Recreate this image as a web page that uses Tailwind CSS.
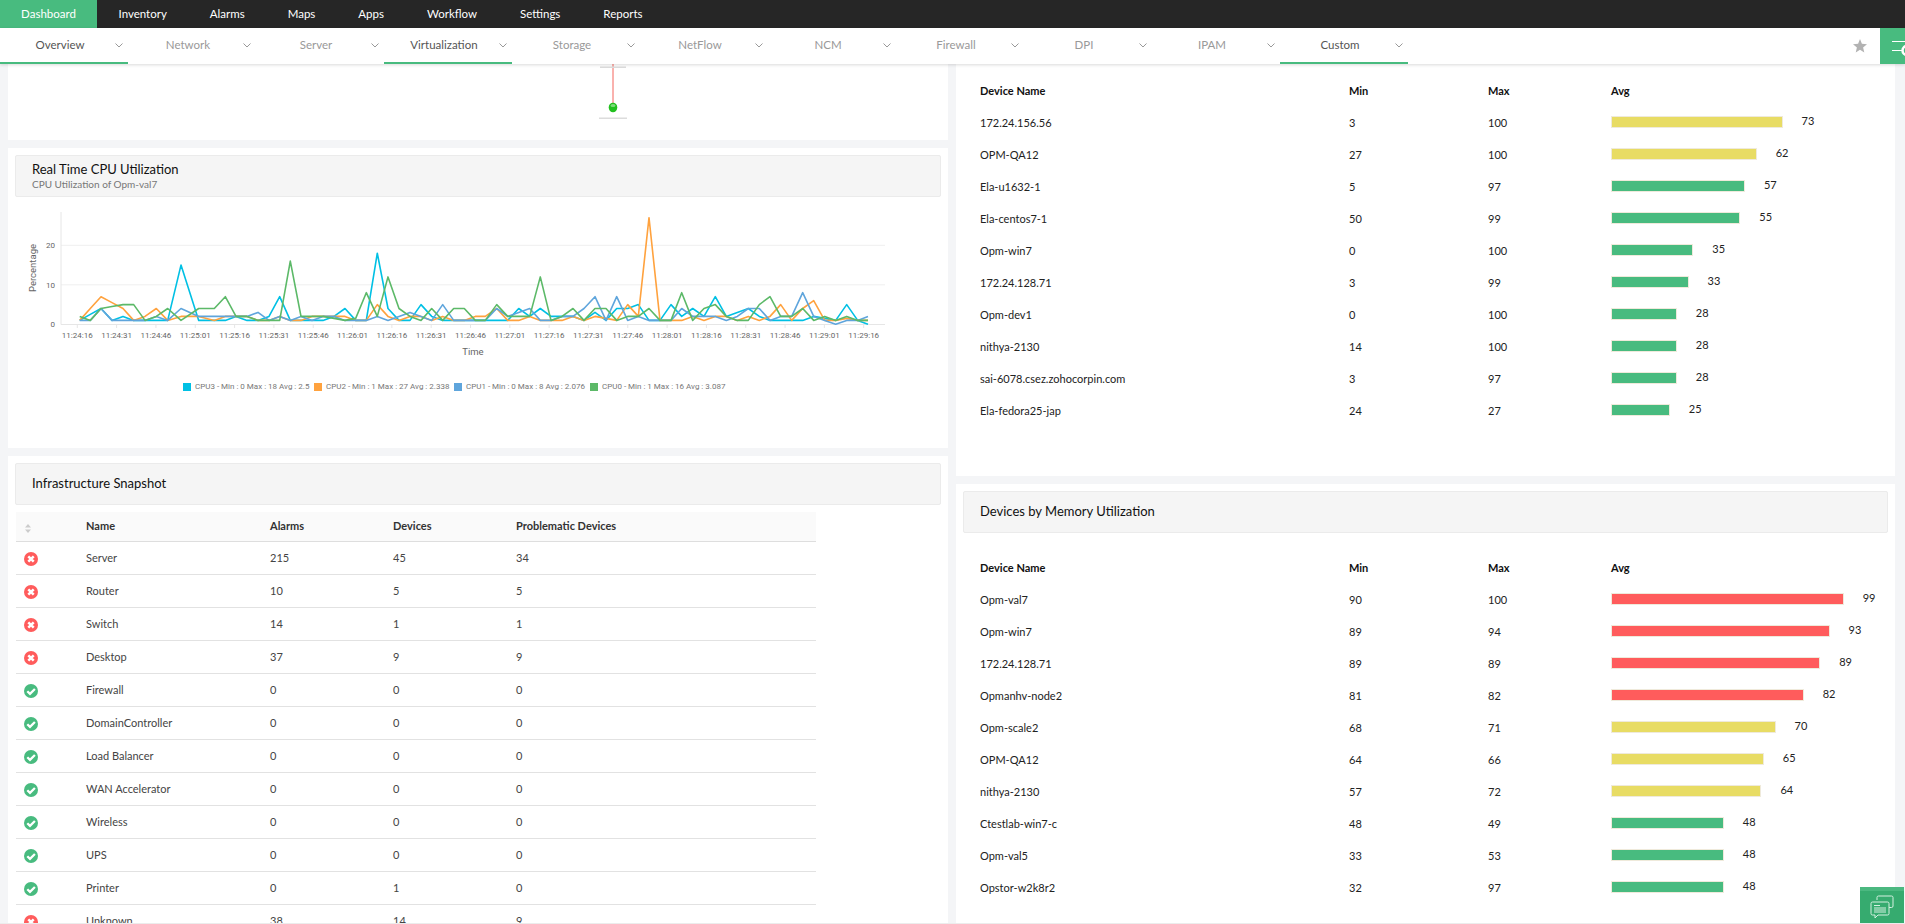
<!DOCTYPE html>
<html lang="en">
<head>
    <meta charset="UTF-8">
    <title>Dashboard - Virtualization</title>
    <script src="https://cdn.jsdelivr.net/npm/@tailwindcss/browser@4"></script>
</head>
<body class="h-screen overflow-hidden bg-[#f4f5f7] font-['Lato',sans-serif] text-[11px] text-[#222]">

    <!-- Main menu -->
    <nav class="flex h-[28px] bg-[#262626] text-[11.5px] text-white">
        <a class="flex w-[97px] items-center justify-center bg-[#48bb7f]">Dashboard</a>
        <a class="flex items-center px-[21.5px]">Inventory</a>
        <a class="flex items-center px-[21.5px]">Alarms</a>
        <a class="flex items-center px-[21.5px]">Maps</a>
        <a class="flex items-center px-[21.5px]">Apps</a>
        <a class="flex items-center px-[21.5px]">Workflow</a>
        <a class="flex items-center px-[21.5px]">Settings</a>
        <a class="flex items-center px-[21.5px]">Reports</a>
    </nav>

    <!-- Sub menu -->
    <div class="relative z-10 flex h-[36px] bg-white text-[11.5px] shadow-[0_1px_3px_rgba(0,0,0,0.15)]">
        <div id="tabs" class="flex flex-1"></div>
        <div class="flex w-[40px] items-center">
            <svg class="ml-[13px]" width="14" height="14" viewBox="0 0 14 14"><polygon points="7,0 8.9,4.8 14,5.2 10.1,8.5 11.3,13.6 7,10.8 2.7,13.6 3.9,8.5 0,5.2 5.1,4.8" fill="#b2b2b2"/></svg>
        </div>
        <div class="h-[36px] w-[25px] overflow-hidden bg-[#48bb7f]">
            <svg width="25" height="36" viewBox="0 0 25 36"><path d="M12 13.5H25M12 22.5H22" stroke="#fff" stroke-width="1"/><circle cx="27" cy="22.5" r="4.5" fill="none" stroke="#fff" stroke-width="2.5"/></svg>
        </div>
    </div>

    <main class="grid h-[860px] grid-cols-[940px_939px] gap-x-[8px] overflow-hidden border-b border-[#ececec] pl-[8px]">

        <!-- Left column -->
        <div class="flex flex-col gap-y-[8px]">
            <!-- Topology map, scrolled under the menu -->
            <section class="h-[76px] shrink-0 bg-white">
                <svg width="940" height="76" viewBox="8 64 940 76">
                    <line x1="613" y1="64" x2="613" y2="104" stroke="#f4655c" stroke-width="1"/>
                    <rect x="600" y="66.500" width="26" height="1.500" fill="#dcdcdc"/>
                    <ellipse cx="613" cy="107.500" rx="4.300" ry="4.800" fill="#22c01f"/>
                    <ellipse cx="613" cy="105.500" rx="2.500" ry="1.500" fill="#7fdc7c"/>
                    <rect x="599" y="117.500" width="28" height="1.500" fill="#dcdcdc"/>
                </svg>
            </section>

            <!-- Real time CPU -->
            <section class="h-[300px] shrink-0 bg-white pt-[7px]">
                <div class="mx-[7px] flex h-[42px] flex-col justify-center rounded-[2px] border border-[#ebebeb] bg-[#f5f5f5] pl-[16px]">
                    <h2 class="text-[13px] leading-[17px] text-[#111]">Real Time CPU Utilization</h2>
                    <p class="text-[10px] leading-[13px] text-[#777]">CPU Utilization of Opm-val7</p>
                </div>
                <svg id="chart" class="block" width="940" height="172" viewBox="8 197 940 172"></svg>
                <div class="mt-[13px] flex items-center whitespace-nowrap pl-[175px] font-['Roboto',sans-serif] text-[8px] leading-[10px] text-[#777]">
                    <span class="h-[8px] w-[8px] bg-[#00c0e4]"></span><span class="ml-[4px] w-[119px]">CPU3 - Min : 0 Max : 18 Avg : 2.5</span>
                    <span class="h-[8px] w-[8px] bg-[#ffa23e]"></span><span class="ml-[4px] w-[128px]">CPU2 - Min : 1 Max : 27 Avg : 2.338</span>
                    <span class="h-[8px] w-[8px] bg-[#5fa5dc]"></span><span class="ml-[4px] w-[124px]">CPU1 - Min : 0 Max : 8 Avg : 2.076</span>
                    <span class="h-[8px] w-[8px] bg-[#5cb968]"></span><span class="ml-[4px]">CPU0 - Min : 1 Max : 16 Avg : 3.087</span>
                </div>
            </section>

            <!-- Infrastructure snapshot -->
            <section class="flex-1 bg-white pt-[7px]">
                <div class="mx-[7px] flex h-[42px] items-center rounded-[2px] border border-[#ebebeb] bg-[#f5f5f5] pl-[16px]">
                    <h2 class="text-[13px] text-[#111]">Infrastructure Snapshot</h2>
                </div>
                <div class="ml-[8px] mt-[7px] w-[800px]">
                    <div class="grid h-[30px] grid-cols-[70px_184px_123px_123px_1fr] items-center border-b border-[#dedede] bg-[#fafafa] font-bold text-[#333]">
                        <svg class="ml-[9px] mt-[4px]" width="6" height="9" viewBox="0 0 6 9"><path d="M3 0L6 3.5H0ZM3 9L0 5.5H6Z" fill="#ccc"/></svg>
                        <span>Name</span><span>Alarms</span><span>Devices</span><span>Problematic Devices</span>
                    </div>
                    <div id="snapshot"></div>
                </div>
            </section>
        </div>

        <!-- Right column -->
        <div class="flex flex-col gap-y-[8px]">
            <section class="h-[412px] shrink-0 bg-white pl-[24px] pt-[11px]">
                <div id="cpu-table"></div>
            </section>
            <section class="flex-1 bg-white pt-[7px]">
                <div class="mx-[7px] flex h-[42px] items-center rounded-[2px] border border-[#ebebeb] bg-[#f5f5f5] pl-[16px]">
                    <h2 class="text-[13px] text-[#111]">Devices by Memory Utilization</h2>
                </div>
                <div id="mem-table" class="ml-[24px] mt-[19px]"></div>
            </section>
        </div>
    </main>

    <!-- Chat button -->
    <div class="fixed bottom-[1px] right-[1px] flex h-[36px] w-[44px] items-center justify-center border-t-[4px] border-[#4bb880] bg-[#36ab6f]">
        <svg width="24" height="24" viewBox="0 0 24 24" fill="none" stroke="#d5f0e1" stroke-width="1">
            <path d="M7 5V2.5A1.5 1.5 0 0 1 8.5 1H21.5A1.5 1.5 0 0 1 23 2.5V11A1.5 1.5 0 0 1 21.5 12.500H19"/>
            <path d="M2.500 7H17.500A1.500 1.500 0 0 1 19 8.500V18.500A1.500 1.500 0 0 1 17.500 20H8L5 23V20H2.500A1.500 1.500 0 0 1 1 18.500V8.500A1.500 1.500 0 0 1 2.500 7Z" fill="#36ab6f"/>
            <path d="M4 10.500H10M4 13H16M4 15H16M4 17H16" stroke-width="1"/>
        </svg>
    </div>

    <script>
        // Sub menu tabs
        const tabs = [
            ['Overview', true], ['Network', false], ['Server', false], ['Virtualization', true],
            ['Storage', false], ['NetFlow', false], ['NCM', false], ['Firewall', false],
            ['DPI', false], ['IPAM', false], ['Custom', true]
        ];
        document.getElementById('tabs').innerHTML = tabs.map(([name, active]) => `
            <a class="flex h-[36px] w-[128px] items-center border-b-2 ${active ? 'border-[#48bb7f] text-[#555]' : 'border-transparent text-[#999]'}">
                <span class="w-[120px] text-center">${name}</span>
                <svg class="-ml-[5px]" width="8" height="5" viewBox="0 0 8 5"><path d="M0.500 0.500L4 4L7.500 0.500" fill="none" stroke="#999" stroke-width="1"/></svg>
            </a>`).join('');

        // Chart data: x position in 1/3 px, then one value per x for each CPU
        const xs = [239,271,303,336,369,401,435,469,503,543,596,643,676,708,741,774,807,839,871,903,936,969,1002,1035,1067,1099,1132,1164,1197,1230,1263,1295,1328,1361,1393,1426,
                    1456,1490,1523,1556,1589,1621,1653,1686,1719,1752,1785,1818,1850,1883,1915,1947,1980,2013,2045,2078,2112,2146,2179,2212,2245,2278,2310,2342,2375,2408,2441,2474,2507,2540,2573,2604];
        const series = [
            ['#00c0e4', [1,2.5,4,1,2,1,1,1,1,15,1,1,1,2,1,1,2,7,1,1,1,1,2,4,1,1,18,4,1,1,5,2,1,1,1,1,
                         1,1,1,4,2,4,2,2,2,1,3,1,4,4,5,1,1,5,2,4,2,7,2,3,4,2,1,1,1,1,2,1.5,1,5,1,0]],
            ['#ffa23e', [1,4,7,5.5,4,1,2,4,1,2,2,1,2,2,2,1,1,2,1,1,2,2,2,2,1,1,5,2,1,2,2,1,2,1,1,2,
                         2,4,1,1,2,1,1,1,2,1,2,1.5,1,5,2,27,1,1,1,2,1,2,2,1,2,1,2,5,1,4,6,1,1,1.5,1,1]],
            ['#5fa5dc', [1,1,4,1,1,1,1,2,1,4,2,2,2,2,2,3,1,2,1,2,1,2,2,1,1,1,2,1,2,3,2,1,5,1,1,1,
                         1,4,2,3,4,1,1,2,2,4,7,1,7,1,2,1,1,1,4,2,2,2,1,2,4,4,1,2,2,8,2,1,0,1,1,2]],
            ['#5cb968', [2,1,4,4.5,5,5,1,2,4,1,4,4,7,2,2,1,1,1,16,2,2,2,1.5,1,1.5,8,2,12,4,2,1,4,1,4,4,1,
                         1,5,2,2,2,12,1,2,4,1,4,4,1,2,2,4,1,1,8,1,4,5,2,1,1,5,7,2,2,4,1,2,1,2,1,1]]
        ];
        const valY = v => 324.3 - v * 3.95;
        let chart = '';
        // grid lines and axis
        [10, 20].forEach(v => {
            chart += `<line x1="61" x2="885" y1="${valY(v)}" y2="${valY(v)}" stroke="#efefef"/>`;
        });
        chart += '<line x1="61" x2="61" y1="212" y2="324.500" stroke="#e6e6e6"/><line x1="61" x2="885" y1="324.500" y2="324.500" stroke="#e6e6e6"/>';
        const axisFont = 'font-family="Roboto, sans-serif" font-size="8" fill="#666"';
        const titleFont = 'font-family="Roboto, sans-serif" font-size="9.5" fill="#666"';
        [0, 10, 20].forEach(v => {
            chart += `<text x="55" y="${valY(v) + 3}" text-anchor="end" ${axisFont}>${v}</text>`;
        });
        for (let i = 0; i <= 20; i++) {
            const secs = 16 + i * 15;
            const m = 24 + Math.floor(secs / 60);
            const s = String(secs % 60).padStart(2, '0');
            const x = 77.300 + i * 39.320;
            chart += `<line x1="${x}" x2="${x}" y1="324.500" y2="328" stroke="#e6e6e6"/>`;
            chart += `<text x="${x}" y="337.500" text-anchor="middle" ${axisFont}>11:${m}:${s}</text>`;
        }
        chart += `<text x="473" y="355" text-anchor="middle" ${titleFont}>Time</text>`;
        chart += `<text transform="translate(36 268) rotate(-90)" text-anchor="middle" ${titleFont}>Percentage</text>`;
        series.forEach(([color, vals]) => {
            const pts = vals.map((v, i) => `${(xs[i] / 3).toFixed(1)},${valY(v).toFixed(1)}`).join(' ');
            chart += `<polyline points="${pts}" fill="none" stroke="${color}" stroke-width="1.600" stroke-linejoin="round"/>`;
        });
        document.getElementById('chart').innerHTML = chart;

        // Infrastructure snapshot rows
        const snapshot = [
            ['Server', 215, 45, 34, false], ['Router', 10, 5, 5, false], ['Switch', 14, 1, 1, false],
            ['Desktop', 37, 9, 9, false], ['Firewall', 0, 0, 0, true], ['DomainController', 0, 0, 0, true],
            ['Load Balancer', 0, 0, 0, true], ['WAN Accelerator', 0, 0, 0, true], ['Wireless', 0, 0, 0, true],
            ['UPS', 0, 0, 0, true], ['Printer', 0, 1, 0, true], ['Unknown', 38, 14, 9, false]
        ];
        const okIcon = '<svg class="ml-[8px] mt-[1px]" width="14" height="14" viewBox="0 0 14 14"><circle cx="7" cy="7" r="7" fill="#48bb7f"/><path d="M3.300 7.200L6 9.900L10.900 5" fill="none" stroke="#fff" stroke-width="2.300"/></svg>';
        const badIcon = '<svg class="ml-[8px] mt-[1px]" width="14" height="14" viewBox="0 0 14 14"><circle cx="7" cy="7" r="7" fill="#ff5c5c"/><path d="M4.300 4.300L9.700 9.700M9.700 4.300L4.300 9.700" fill="none" stroke="#fff" stroke-width="2.500"/></svg>';
        document.getElementById('snapshot').innerHTML = snapshot.map(([name, alarms, devices, bad, ok]) => `
            <div class="grid h-[33px] grid-cols-[70px_184px_123px_123px_1fr] items-center border-b border-[#e2e2e2] text-[#444]">
                ${ok ? okIcon : badIcon}
                <span>${name}</span><span>${alarms}</span><span>${devices}</span><span>${bad}</span>
            </div>`).join('');

        // Device tables: [name, min, max, avg, bar colour]
        const green = 'bg-[#48bb7f]', yellow = 'bg-[#e8dc64]', red = 'bg-[#ff5c5c]';
        const cpuRows = [
            ['172.24.156.56', 3, 100, 73, yellow], ['OPM-QA12', 27, 100, 62, yellow], ['Ela-u1632-1', 5, 97, 57, green],
            ['Ela-centos7-1', 50, 99, 55, green], ['Opm-win7', 0, 100, 35, green], ['172.24.128.71', 3, 99, 33, green],
            ['Opm-dev1', 0, 100, 28, green], ['nithya-2130', 14, 100, 28, green], ['sai-6078.csez.zohocorpin.com', 3, 97, 28, green],
            ['Ela-fedora25-jap', 24, 27, 25, green]
        ];
        const memRows = [
            ['Opm-val7', 90, 100, 99, red], ['Opm-win7', 89, 94, 93, red], ['172.24.128.71', 89, 89, 89, red],
            ['Opmanhv-node2', 81, 82, 82, red], ['Opm-scale2', 68, 71, 70, yellow], ['OPM-QA12', 64, 66, 65, yellow],
            ['nithya-2130', 57, 72, 64, yellow], ['Ctestlab-win7-c', 48, 49, 48, green], ['Opm-val5', 33, 53, 48, green],
            ['Opstor-w2k8r2', 32, 97, 48, green]
        ];
        function deviceTable(rows) {
            const head = `<div class="grid h-[32px] grid-cols-[369px_139px_123px_1fr] items-center font-bold text-[#111]">
                <span>Device Name</span><span>Min</span><span>Max</span><span>Avg</span></div>`;
            return head + rows.map(([name, min, max, avg, color]) => `
                <div class="grid h-[32px] grid-cols-[369px_139px_123px_1fr] items-center">
                    <span>${name}</span><span>${min}</span><span>${max}</span>
                    <div class="flex items-center">
                        <div class="mb-[2px] h-[12px] border border-[#efeadb] ${color}" style="width:${avg * 2.35}px"></div>
                        <span class="mb-[4px] ml-[19px]">${avg}</span>
                    </div>
                </div>`).join('');
        }
        document.getElementById('cpu-table').innerHTML = deviceTable(cpuRows);
        document.getElementById('mem-table').innerHTML = deviceTable(memRows);
    </script>
</body>
</html>
